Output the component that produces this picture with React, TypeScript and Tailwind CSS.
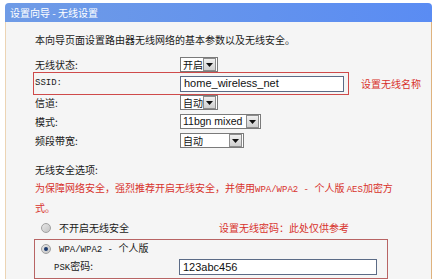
import React from "react";

const cjk = "font-['SimSun','Noto_Sans_CJK_SC',sans-serif]";
const mono = "font-['Liberation_Mono','Noto_Sans_CJK_SC',monospace]";
const latin = "font-['Liberation_Sans',Arial,sans-serif]";

function Arrow() {
  return (
    <span className="flex h-[13px] w-[13px] shrink-0 items-center justify-center border border-[#8c8c8c] bg-gradient-to-b from-[#f0f0f0] to-[#cfcfcf]">
      <svg width="7" height="4" viewBox="0 0 7 4">
        <path d="M0 0h7L3.5 4z" fill="#111" />
      </svg>
    </span>
  );
}

function Select({ value, width, isLatin }: { value: string; width: string; isLatin?: boolean }) {
  return (
    <div className={`flex h-[15px] items-center justify-between border border-[#7a7a7a] bg-white pl-[2px] pr-px ${width}`}>
      <span
        className={`whitespace-nowrap leading-none text-[#111] ${
          isLatin ? `${latin} text-[10.5px]` : `${cjk} text-[10px]`
        }`}
      >
        {value}
      </span>
      <Arrow />
    </div>
  );
}

function Radio({ checked }: { checked?: boolean }) {
  return (
    <span className="flex h-[10px] w-[10px] shrink-0 items-center justify-center rounded-full border border-[#a0a0a0] bg-gradient-to-br from-[#e6e6e6] to-[#c4c4c4]">
      {checked && <span className="h-[4px] w-[4px] rounded-full bg-[#1d3b6e]" />}
    </span>
  );
}

export default function App() {
  const rows = [
    { label: "无线状态:", control: <Select value="开启" width="w-[38px]" /> },
    { label: "SSID:", ssid: true },
    { label: "信道:", control: <Select value="自动" width="w-[38px]" /> },
    { label: "模式:", control: <Select value="11bgn mixed" width="w-[81px]" isLatin /> },
    { label: "频段带宽:", control: <Select value="自动" width="w-[64px]" /> },
  ];

  return (
    <div className={`h-[279px] w-[442px] overflow-hidden bg-white pl-[5px] pt-[3px] ${cjk}`}>
      <div className="w-[427px]">
        {/* Header */}
        <div className="flex h-[19px] items-center rounded-t-[4px] bg-gradient-to-r from-[#6f9be6] to-[#5a8cf3] pl-[5px]">
          <span className="text-[10px] leading-none text-white">设置向导 - 无线设置</span>
        </div>

        {/* Body */}
        <div className="h-[260px] border-x border-l-[#ecd4b4] border-r-[#dfb37e] bg-[#f5f5f5] pl-[29px] text-[10px] text-[#1a1a1a]">
          <p className="pt-[9px] leading-[18px]">本向导页面设置路由器无线网络的基本参数以及无线安全。</p>

          <div className="mt-[6px]">
            {rows.map((row) => (
              <div key={row.label} className="relative flex h-[19px] items-center">
                <span className={`w-[145px] leading-none ${row.ssid ? `${mono} text-[9px]` : ""}`}>{row.label}</span>
                {row.ssid ? (
                  <>
                    <div className="flex h-[16px] w-[164px] items-center border border-[#5b6b86] bg-white pl-[3px]">
                      <span className={`${latin} text-[11px] leading-none text-[#111]`}>home_wireless_net</span>
                    </div>
                    <span className="ml-[17px] leading-none text-[#d8322c]">设置无线名称</span>
                    <span className="pointer-events-none absolute left-[-2px] top-[-2px] h-[23px] w-[316px] border border-[#cf4a4a]" />
                  </>
                ) : (
                  row.control
                )}
              </div>
            ))}
          </div>

          <p className="mt-[11px] leading-[18px]">无线安全选项:</p>
          <p className="whitespace-nowrap leading-[18px] text-[#d8322c]">
            为保障网络安全，强烈推荐开启无线安全，并使用
            <span className={`${mono} text-[9px]`}>WPA/WPA2 - </span>
            个人版 <span className={`${mono} text-[9px]`}>AES</span>加密方
            <br />
            式。
          </p>

          <div className="mt-[2px] flex h-[18px] items-center">
            <div className="flex w-[184px] items-center">
              <span className="ml-[6px]">
                <Radio />
              </span>
              <span className="ml-[8px] leading-none">不开启无线安全</span>
            </div>
            <span className="leading-none text-[#d8322c]">设置无线密码：此处仅供参考</span>
          </div>

          <div className="-ml-px mt-[2px] w-[354px] border border-[#b86464] pb-px">
            <div className="flex h-[17px] items-center">
              <span className="ml-[6px]">
                <Radio checked />
              </span>
              <span className="ml-[8px] leading-none">
                <span className={`${mono} text-[9px]`}>WPA/WPA2 - </span>个人版
              </span>
            </div>
            <div className="flex h-[20px] items-center">
              <span className="ml-[19px] w-[125px] leading-none">
                <span className={`${mono} text-[9px]`}>PSK</span>密码:
              </span>
              <div className="flex h-[16px] w-[198px] items-center border border-[#5b6b86] bg-white pl-[3px]">
                <span className={`${latin} text-[11px] leading-none text-[#111]`}>123abc456</span>
              </div>
            </div>
          </div>
        </div>
      </div>
    </div>
  );
}
